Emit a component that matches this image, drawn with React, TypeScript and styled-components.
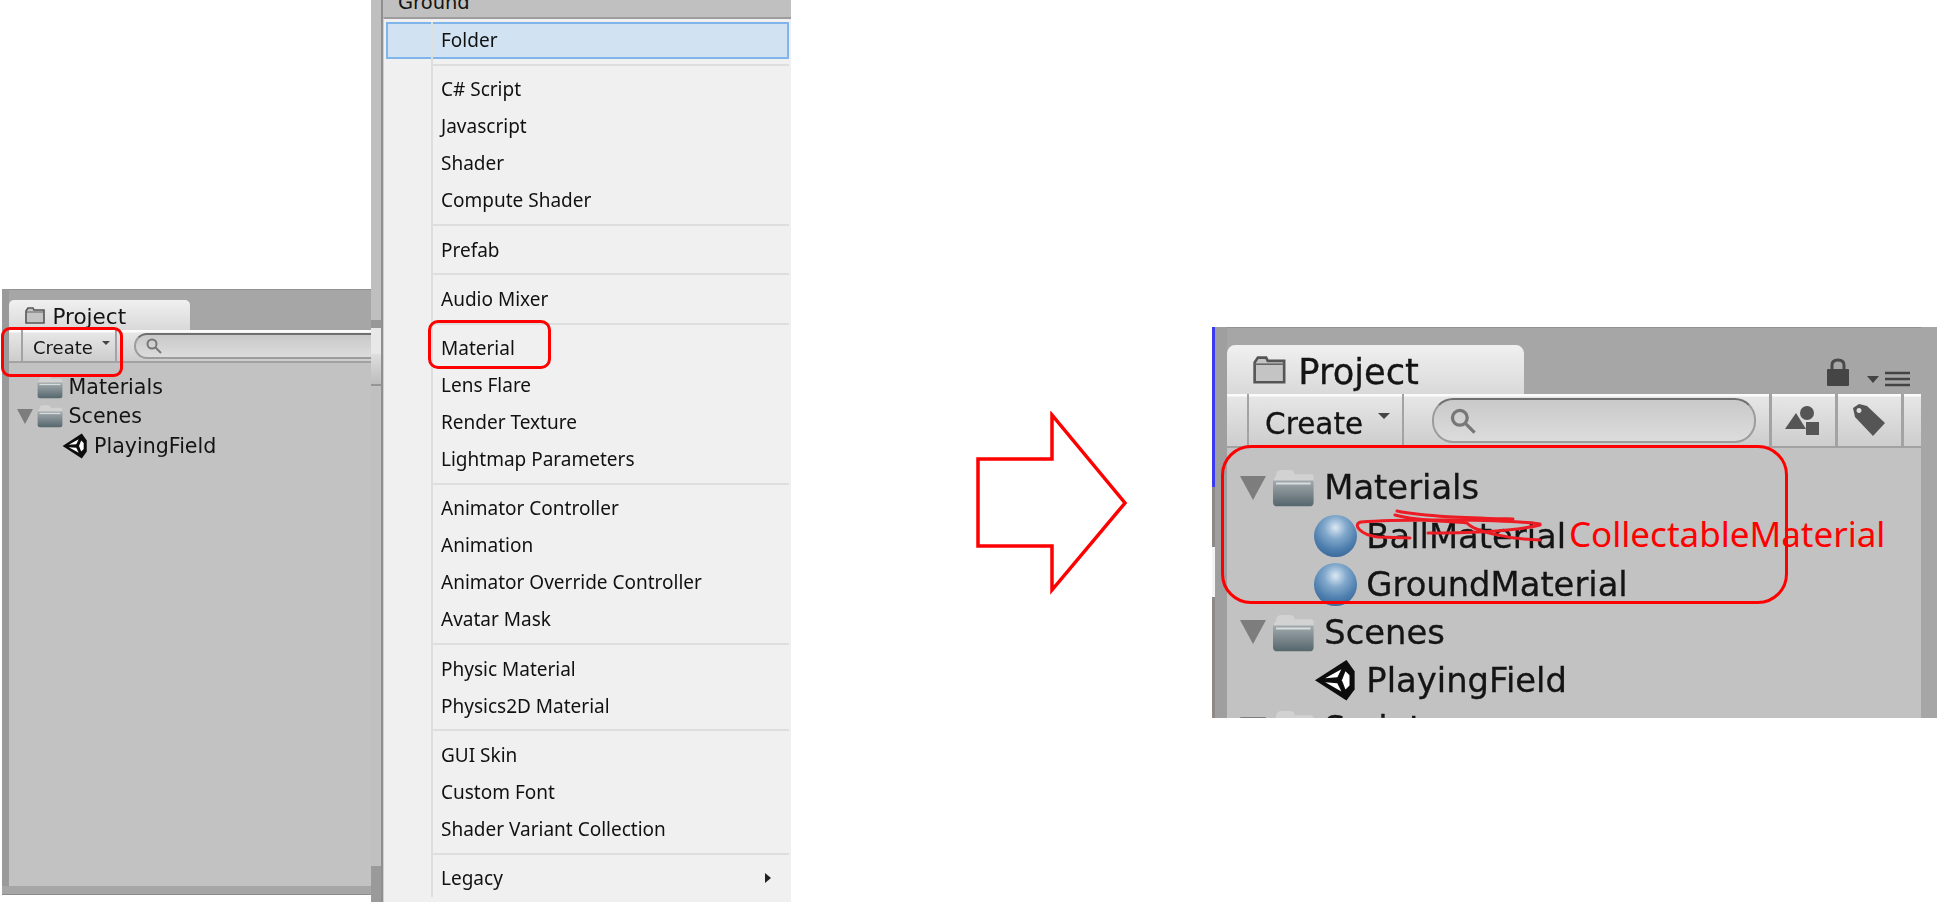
import React from "react";
import styled, { createGlobalStyle } from "styled-components";

const GlobalStyle = createGlobalStyle`
  html, body {
    margin: 0;
    background: #fff;
    overflow: hidden;
  }
  * {
    box-sizing: border-box;
  }
`;

const Page = styled.div`
  display: flex;
  align-items: flex-start;
  width: 1940px;
  height: 903px;
  padding-left: 2px;
`;

const Shot = styled.div<{ $big?: boolean }>`
  position: relative;
  flex: none;
  width: ${(p) => (p.$big ? "725px" : "369px")};
  height: ${(p) => (p.$big ? "391px" : "606px")};
  margin-top: ${(p) => (p.$big ? "327px" : "289px")};
  margin-left: ${(p) => (p.$big ? "84px" : "0")};
  --u: ${(p) => (p.$big ? "1.64px" : "1px")};
`;

const Frame = styled.div<{ $big?: boolean }>`
  display: flex;
  height: 100%;
  overflow: hidden;
  background: #a6a6a6;
  padding-right: ${(p) => (p.$big ? "16px" : "0")};
  padding-bottom: ${(p) => (p.$big ? "0" : "8px")};
  border-bottom: ${(p) => (p.$big ? "0" : "1px solid #8c8c8c")};
`;

const Edge = styled.div<{ $big?: boolean }>`
  flex: none;
  width: ${(p) => (p.$big ? "15px" : "7px")};
  background: ${(p) =>
    p.$big
      ? "linear-gradient(to bottom, #3a3af0 0 160px, #8e8a87 160px 220px, #f4f4f4 220px 270px, #8e8a87 270px) left / 3px 100% no-repeat, #9f9f9f"
      : "#9a9a9a"};
`;

const Body = styled.div`
  display: flex;
  flex: 1;
  min-width: 0;
  flex-direction: column;
`;

const Header = styled.div`
  flex: none;
  display: flex;
  align-items: flex-end;
  justify-content: space-between;
  height: calc(var(--u) * 41);
  border-top: 1px solid #929292;
`;

const Tab = styled.div`
  display: flex;
  align-items: center;
  width: calc(var(--u) * 181);
  height: calc(var(--u) * 30);
  padding-left: calc(var(--u) * 16);
  gap: calc(var(--u) * 7.5);
  background: linear-gradient(to bottom, #f0f0f0, #d9d9d9);
  border-radius: calc(var(--u) * 5) calc(var(--u) * 5) 0 0;
`;

const Label = styled.span`
  font-family: "DejaVu Sans", sans-serif;
  color: #141414;
  white-space: nowrap;
  filter: blur(calc(var(--u) * 0.4));
  -webkit-text-stroke: calc((var(--u) - 1px) * 0.5) #141414;
`;

const TabLabel = styled(Label)`
  font-size: calc(var(--u) * 21.5);
  padding-top: calc(var(--u) * 2);
`;

const HeaderTools = styled.div`
  display: flex;
  align-items: flex-end;
  margin-bottom: 7px;
  margin-right: 10px;
  gap: 17px;
`;

const Toolbar = styled.div`
  flex: none;
  display: flex;
  align-items: stretch;
  height: calc(var(--u) * 33);
  padding-left: calc(var(--u) * 12);
  overflow: hidden;
  background: linear-gradient(to bottom, #fbfbfb 0 2px, #e6e6e6 3px, #cdcdcd);
  border-bottom: 2px solid #a2a2a2;
`;

const CreateButton = styled.div`
  flex: none;
  display: flex;
  align-items: center;
  width: calc(var(--u) * 96);
  padding-left: calc(var(--u) * 10);
  gap: calc(var(--u) * 9);
  border-left: 2px solid #a3a3a3;
  border-right: 2px solid #a3a3a3;
`;

const ButtonLabel = styled(Label)`
  font-size: calc(var(--u) * 18);
  padding-top: calc(var(--u) * 4);
`;

const Caret = styled.span`
  width: 0;
  height: 0;
  margin-bottom: calc(var(--u) * 5);
  border-left: calc(var(--u) * 4) solid transparent;
  border-right: calc(var(--u) * 4) solid transparent;
  border-top: calc(var(--u) * 4) solid #444;
`;

const Search = styled.div<{ $w: string }>`
  flex: none;
  display: flex;
  align-items: center;
  width: ${(p) => p.$w};
  margin: calc(var(--u) * 2.5) 0 calc(var(--u) * 2) calc(var(--u) * 17);
  padding-left: calc(var(--u) * 10);
  background: linear-gradient(to bottom, #c9c9c9, #dcdcdc);
  border: 2px solid #9c9c9c;
  border-top-color: #6f6f6f;
  border-radius: calc(var(--u) * 13);
`;

const ToolCell = styled.div`
  flex: none;
  display: flex;
  align-items: center;
  justify-content: center;
  width: 66px;
  border-left: 3px solid #a3a3a3;
`;

const ToolCells = styled.div`
  display: flex;
  margin-left: 13px;
`;

const Tree = styled.div`
  flex: 1;
  min-height: 0;
  padding-top: calc(var(--u) * 9.4);
  background: #c2c2c2;
`;

const Row = styled.div<{ $indent: number }>`
  display: flex;
  align-items: center;
  height: calc(var(--u) * 29.4);
  padding-left: calc(var(--u) * ${(p) => p.$indent});
`;

const Twisty = styled.span<{ $open?: boolean }>`
  flex: none;
  width: 0;
  height: 0;
  margin-right: calc(var(--u) * 3.5);
  border-left: calc(var(--u) * 8) solid transparent;
  border-right: calc(var(--u) * 8) solid transparent;
  border-top: calc(var(--u) * 15) solid ${(p) => (p.$open ? "#7d7d7d" : "transparent")};
`;

const RowLabel = styled(Label)`
  font-size: calc(var(--u) * 20.6);
  margin-left: calc(var(--u) * 6);
`;

const Ball = styled.span`
  flex: none;
  width: calc(var(--u) * 26);
  height: calc(var(--u) * 26);
  border-radius: 50%;
  background: radial-gradient(
    circle at 50% 30%,
    #dbe9f4 0,
    #83a9cc 30%,
    #4d7eae 62%,
    #2f5a8a 100%
  );
`;

const IconBox = styled.span`
  flex: none;
  display: flex;
  svg {
    display: block;
    width: 100%;
    height: 100%;
    filter: blur(0.4px);
  }
`;

const FolderBox = styled(IconBox)`
  width: calc(var(--u) * 26);
  height: calc(var(--u) * 24);
`;

const TabFolderBox = styled(IconBox)`
  width: calc(var(--u) * 20);
  height: calc(var(--u) * 17);
`;

const UnityBox = styled(IconBox)`
  width: calc(var(--u) * 26);
  height: calc(var(--u) * 26);
`;

const MagnifierBox = styled(IconBox)`
  width: calc(var(--u) * 16);
  height: calc(var(--u) * 16);
`;

const MenuColumn = styled.div`
  position: relative;
  flex: none;
  display: flex;
  width: 420px;
  height: 903px;
`;

const Strip = styled.div`
  flex: none;
  width: 12px;
  height: 902px;
  background: linear-gradient(
    to bottom,
    #bfbfbf 0 320px,
    #989898 320px 328px,
    #e8e8e8 328px 354px,
    #dedede 354px,
    #bdbdbd 384px,
    #969696 384px 386px,
    #c0c0c0 386px 866px,
    #9a9a9a 866px
  );
  border-right: 2px solid #8f8f8f;
`;

const MenuBody = styled.div`
  flex: 1;
  display: flex;
  flex-direction: column;
  height: 902px;
`;

const GroundBar = styled.div`
  flex: none;
  height: 17px;
  padding-left: 15px;
  overflow: hidden;
  background: #c0c0c0;
`;

const GroundLabel = styled(Label)`
  display: block;
  margin-top: -9px;
  font-size: 19.5px;
  line-height: 24px;
`;

const MenuPanel = styled.div`
  flex: 1;
  padding: 2.5px 2px 0 2px;
  background: #f0f0f0;
  border-top: 2px solid #9d9d9d;
  border-left: 1px solid #cfcfcf;
`;

const Item = styled.div<{ $active?: boolean }>`
  display: flex;
  align-items: stretch;
  height: 37px;
  background: ${(p) => (p.$active ? "#d1e2f2" : "transparent")};
  box-shadow: ${(p) => (p.$active ? "inset 0 0 0 2px #7fb5ea" : "none")};
`;

const Gutter = styled.div`
  flex: none;
  width: 47px;
  border-right: 2px solid #dedede;
`;

const ItemLabel = styled.span`
  flex: 1;
  align-self: center;
  padding-left: 8px;
  font-family: "Noto Sans", sans-serif;
  font-size: 19px;
  color: #111;
  filter: blur(0.3px);
`;

const SubArrow = styled.span`
  align-self: center;
  width: 0;
  height: 0;
  margin-right: 18px;
  border-top: 5px solid transparent;
  border-bottom: 5px solid transparent;
  border-left: 6px solid #222;
`;

const Separator = styled.div`
  display: flex;
  height: 12.3px;
`;

const SeparatorLine = styled.div`
  flex: 1;
  height: 2px;
  align-self: center;
  background: #dedede;
`;

const RedBox = styled.div<{ $l: number; $t: number; $w: number; $h: number; $r: number }>`
  position: absolute;
  left: ${(p) => p.$l}px;
  top: ${(p) => p.$t}px;
  width: ${(p) => p.$w}px;
  height: ${(p) => p.$h}px;
  border: 3.5px solid #f00;
  border-radius: ${(p) => p.$r}px;
`;

const BigArrow = styled.svg`
  flex: none;
  margin-top: 411px;
  margin-left: 185px;
`;

const Scribble = styled.svg`
  position: absolute;
  left: 144px;
  top: 170px;
  overflow: visible;
`;

const NewName = styled.span`
  position: absolute;
  left: 357px;
  top: 186px;
  font-family: "Noto Sans", sans-serif;
  font-size: 35px;
  line-height: 42px;
  color: #f00;
  white-space: nowrap;
`;

const FolderIcon = () => (
  <svg viewBox="0 0 42 38" preserveAspectRatio="none">
    <defs>
      <linearGradient id="folderFill" x1="0" y1="0" x2="0" y2="1">
        <stop offset="0" stopColor="#a3aaad" />
        <stop offset="1" stopColor="#55666d" />
      </linearGradient>
    </defs>
    <path d="M4 8 Q4 2 9 2 H18 Q22 2 22 6 H38 Q41 6 41 9 V14 H2 V10 Z" fill="#d2d2d2" />
    <path d="M1 12 H41 V33 Q41 37 37 37 H5 Q1 37 1 33 Z" fill="url(#folderFill)" />
    <path d="M4 15 H38" stroke="#d8dde0" strokeWidth="2" />
  </svg>
);

const TabFolderIcon = () => (
  <svg viewBox="0 0 20 17" preserveAspectRatio="none">
    <path d="M1 4 L3 1 H8 L9 3 H19 V16 H1 Z" fill="#c4c4c4" stroke="#555" strokeWidth="1.6" />
    <path d="M1 5 H19" stroke="#666" strokeWidth="1" />
  </svg>
);

const UnityIcon = () => (
  <svg viewBox="0 0 42 42">
    <path d="M1 21 L32 1 L40 12 V30 L32 41 Z" fill="#0c0c0c" />
    <path d="M11 19 L27 10 L23 18 Z" fill="#fff" />
    <path d="M11 23 L27 32 L23 24 Z" fill="#fff" />
    <path d="M31 12 L35 16 V26 L31 30 L27.5 21 Z" fill="#fff" />
  </svg>
);

const MagnifierIcon = () => (
  <svg viewBox="0 0 16 16" fill="none" stroke="#777" strokeWidth="2">
    <circle cx="6" cy="6" r="4.5" />
    <path d="M9.5 9.5 L15 15" />
  </svg>
);

const LockIcon = () => (
  <svg width="24" height="30" viewBox="0 0 24 30">
    <path d="M6 14 V8 Q6 3 12 3 Q18 3 18 8 V14" fill="none" stroke="#4a4a4a" strokeWidth="3" />
    <rect x="1" y="12" width="22" height="17" rx="1" fill="#454545" />
  </svg>
);

const PaneMenuIcon = () => (
  <svg width="44" height="16" viewBox="0 0 44 16">
    <path d="M0 5 H12 L6 12 Z" fill="#444" />
    <path d="M18 2 H43 M18 8 H43 M18 14 H43" stroke="#444" strokeWidth="2.5" />
  </svg>
);

const ShapesIcon = () => (
  <svg width="36" height="30" viewBox="0 0 36 30">
    <circle cx="22" cy="8" r="7" fill="#555" />
    <path d="M0 24 L11 8 L21 24 Z" fill="#555" />
    <rect x="21" y="17" width="13" height="13" fill="#555" />
  </svg>
);

const TagIcon = () => (
  <svg width="34" height="34" viewBox="0 0 34 34">
    <path
      fillRule="evenodd"
      d="M1 5 L7 1 L15 3 L33 20 L21 33 L3 14 Z M7 5 A2.5 2.5 0 1 0 7.01 5 Z"
      fill="#555"
    />
  </svg>
);

type MenuEntry = { label: string; active?: boolean; sub?: boolean };

const menuGroups: MenuEntry[][] = [
  [{ label: "Folder", active: true }],
  [
    { label: "C# Script" },
    { label: "Javascript" },
    { label: "Shader" },
    { label: "Compute Shader" },
  ],
  [{ label: "Prefab" }],
  [{ label: "Audio Mixer" }],
  [{ label: "Material" }, { label: "Lens Flare" }, { label: "Render Texture" }, { label: "Lightmap Parameters" }],
  [
    { label: "Animator Controller" },
    { label: "Animation" },
    { label: "Animator Override Controller" },
    { label: "Avatar Mask" },
  ],
  [{ label: "Physic Material" }, { label: "Physics2D Material" }],
  [{ label: "GUI Skin" }, { label: "Custom Font" }, { label: "Shader Variant Collection" }],
  [{ label: "Legacy", sub: true }],
];

const FolderRow = ({ name, open }: { name: string; open?: boolean }) => (
  <Row $indent={8}>
    <Twisty $open={open} />
    <FolderBox>
      <FolderIcon />
    </FolderBox>
    <RowLabel>{name}</RowLabel>
  </Row>
);

const MaterialRow = ({ name }: { name: string }) => (
  <Row $indent={53}>
    <Ball />
    <RowLabel>{name}</RowLabel>
  </Row>
);

const SceneRow = ({ name }: { name: string }) => (
  <Row $indent={53}>
    <UnityBox>
      <UnityIcon />
    </UnityBox>
    <RowLabel>{name}</RowLabel>
  </Row>
);

const ProjectTab = () => (
  <Tab>
    <TabFolderBox>
      <TabFolderIcon />
    </TabFolderBox>
    <TabLabel>Project</TabLabel>
  </Tab>
);

const CreateDropdown = () => (
  <CreateButton>
    <ButtonLabel>Create</ButtonLabel>
    <Caret />
  </CreateButton>
);

const SearchField = ({ width }: { width: string }) => (
  <Search $w={width}>
    <MagnifierBox>
      <MagnifierIcon />
    </MagnifierBox>
  </Search>
);

export default function App() {
  return (
    <Page>
      <GlobalStyle />

      <Shot>
        <Frame>
          <Edge />
          <Body>
            <Header>
              <ProjectTab />
            </Header>
            <Toolbar>
              <CreateDropdown />
              <SearchField width="260px" />
            </Toolbar>
            <Tree>
              <FolderRow name="Materials" />
              <FolderRow name="Scenes" open />
              <SceneRow name="PlayingField" />
            </Tree>
          </Body>
        </Frame>
        <RedBox $l={-1} $t={38} $w={122} $h={50} $r={9} />
      </Shot>

      <MenuColumn>
        <Strip />
        <MenuBody>
          <GroundBar>
            <GroundLabel>Ground</GroundLabel>
          </GroundBar>
          <MenuPanel>
            {menuGroups.map((group, i) => (
              <React.Fragment key={group[0].label}>
                {i > 0 && (
                  <Separator>
                    <Gutter />
                    <SeparatorLine />
                  </Separator>
                )}
                {group.map((entry) => (
                  <Item key={entry.label} $active={entry.active}>
                    <Gutter />
                    <ItemLabel>{entry.label}</ItemLabel>
                    {entry.sub && <SubArrow />}
                  </Item>
                ))}
              </React.Fragment>
            ))}
          </MenuPanel>
        </MenuBody>
        <RedBox $l={57} $t={320} $w={123} $h={49} $r={10} />
      </MenuColumn>

      <BigArrow width="152" height="185" viewBox="0 0 152 185">
        <path
          d="M2 48 H76 V4 L149 92 L76 179 V135 H2 Z"
          fill="#fff"
          stroke="#f00"
          strokeWidth="3.5"
        />
      </BigArrow>

      <Shot $big>
        <Frame $big>
          <Edge $big />
          <Body>
            <Header>
              <ProjectTab />
              <HeaderTools>
                <LockIcon />
                <PaneMenuIcon />
              </HeaderTools>
            </Header>
            <Toolbar>
              <CreateDropdown />
              <SearchField width="324px" />
              <ToolCells>
                <ToolCell>
                  <ShapesIcon />
                </ToolCell>
                <ToolCell>
                  <TagIcon />
                </ToolCell>
                <ToolCell />
              </ToolCells>
            </Toolbar>
            <Tree>
              <FolderRow name="Materials" open />
              <MaterialRow name="BallMaterial" />
              <MaterialRow name="GroundMaterial" />
              <FolderRow name="Scenes" open />
              <SceneRow name="PlayingField" />
              <FolderRow name="Scripts" open />
            </Tree>
          </Body>
        </Frame>
        <RedBox $l={9} $t={118} $w={567} $h={159} $r={30} />
        <Scribble width="200" height="60" viewBox="0 0 200 60">
          <g fill="none" stroke="#ed1c24" strokeWidth="3" strokeLinecap="round">
            <path d="M184 27 C150 22 40 22 5 25 C-4 27 4 38 22 40 L54 41" />
            <path d="M41 14 C70 20 120 21 157 22" />
            <path d="M39 18 C60 24 90 24 111 26 C118 34 150 42 184 43" />
            <path d="M72 36 C110 36 160 34 184 28" />
          </g>
        </Scribble>
        <NewName>CollectableMaterial</NewName>
      </Shot>
    </Page>
  );
}
